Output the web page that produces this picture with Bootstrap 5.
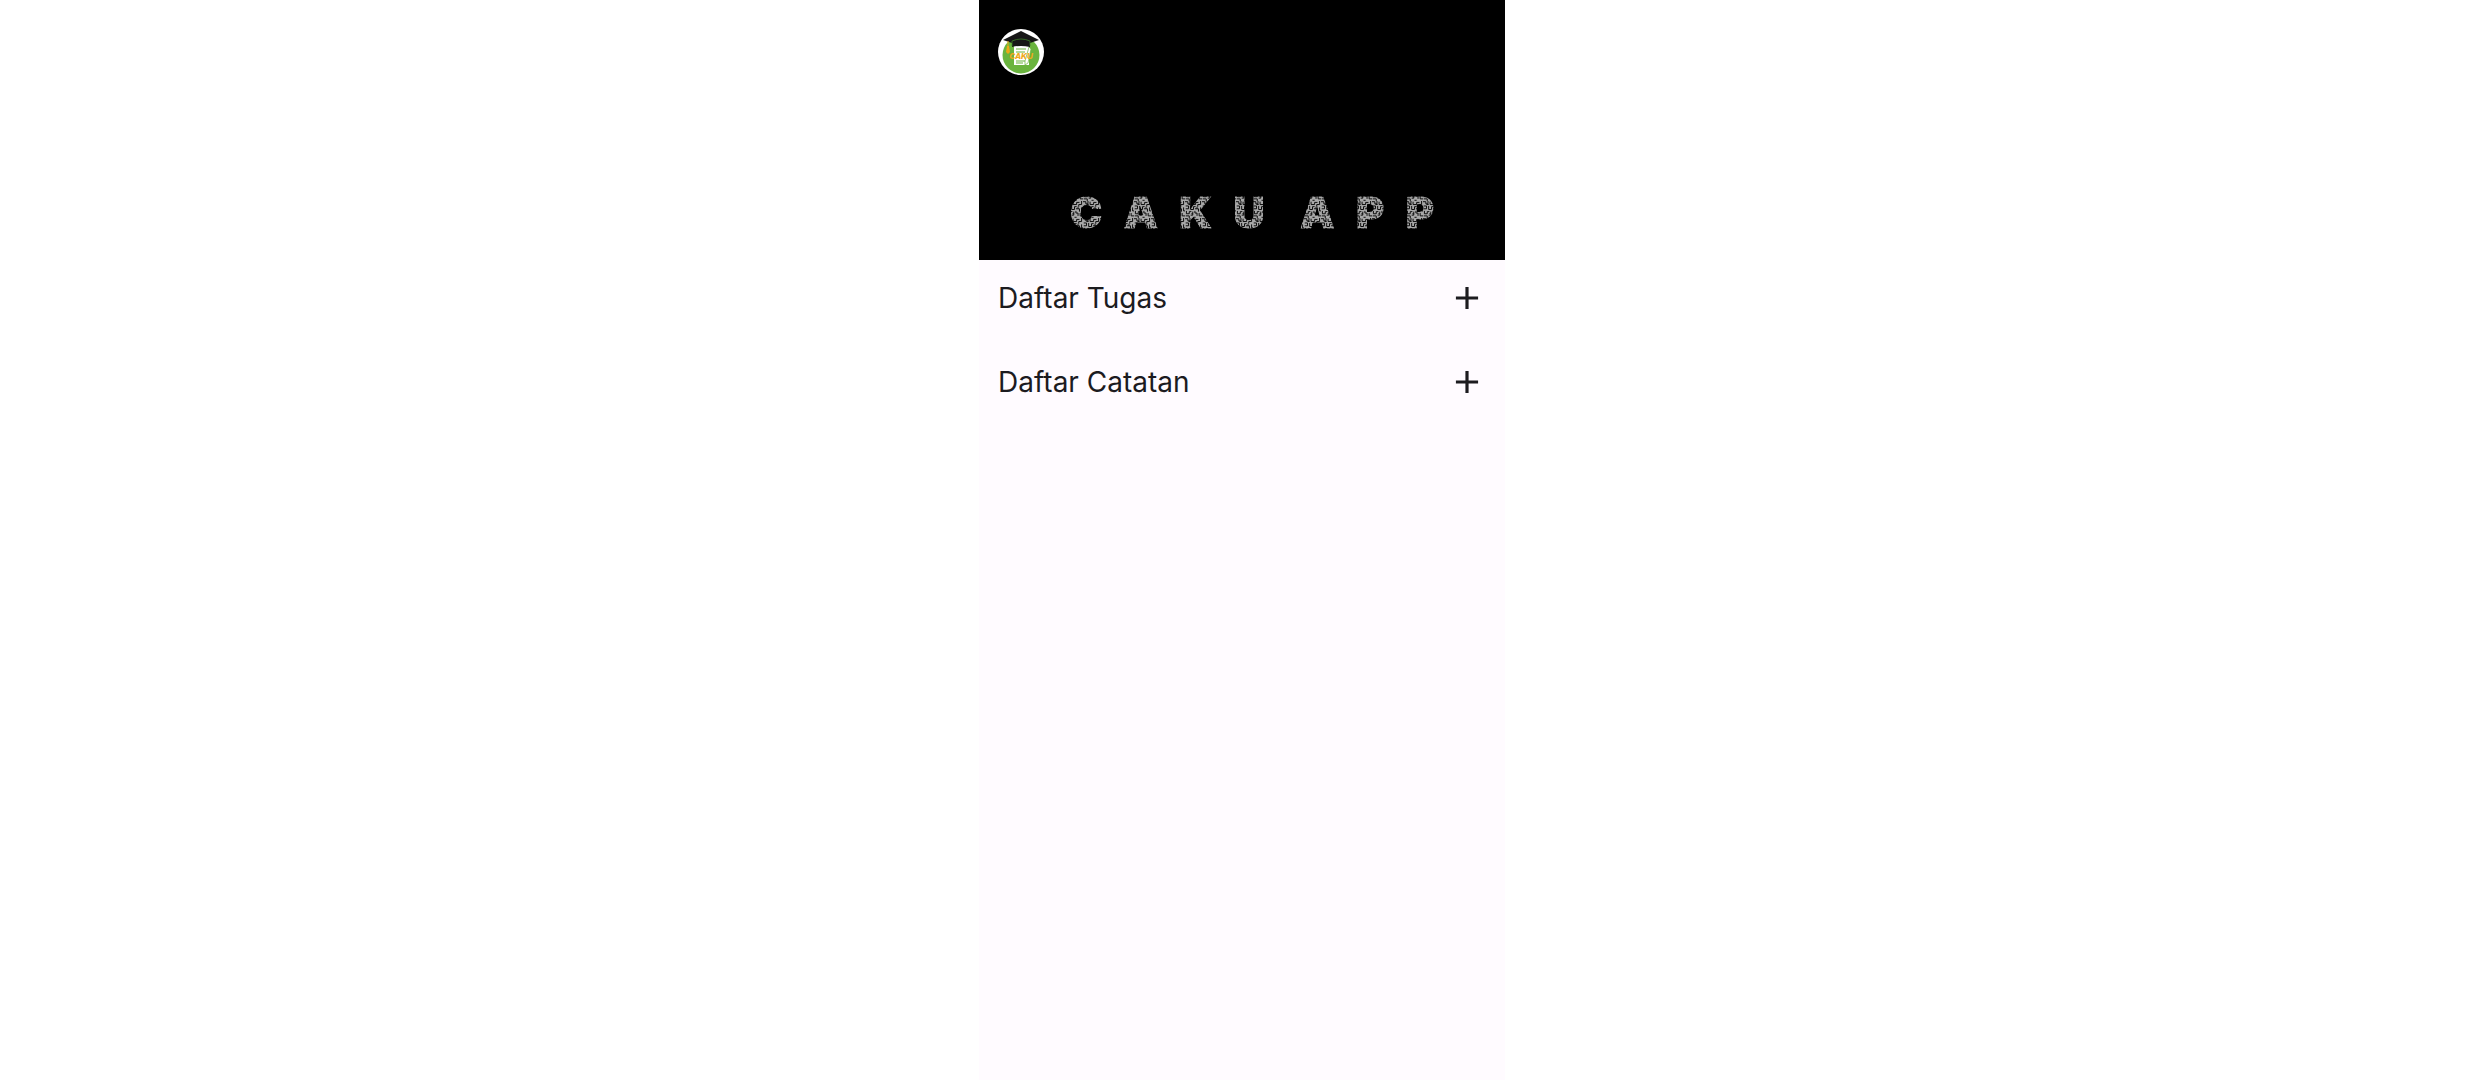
<!DOCTYPE html>
<html lang="id">
<head>
<meta charset="utf-8">
<meta name="viewport" content="width=device-width, initial-scale=1">
<title>Caku App</title>
<link href="https://cdn.jsdelivr.net/npm/bootstrap@5.3.0/dist/css/bootstrap.min.css" rel="stylesheet">
<style>
  body { background: #fff; color: #1c1b1f; font-family: Inter, "Noto Sans", sans-serif; }
  .app-shell { max-width: 526px; background: #fffbff; }
  .app-header { min-height: 260px; padding: 29px 19px 20px; background: #000; }
  .app-logo { width: 46px; height: 46px; }
  .logo-word { font: italic 800 8px Inter, sans-serif; }
  .app-title {
    padding-left: 72px;
    font-size: 43px; line-height: 56px; font-weight: 900; white-space: pre;
    color: transparent;
    -webkit-text-stroke: 1px transparent;
    background: #a8a8a8 url("data:image/svg+xml,%3Csvg xmlns='http://www.w3.org/2000/svg' width='24' height='24'%3E%3Cpath d='M0 1h4v3h3V0M10 1v4h5V2h4M22 0v5h-4v3M1 7h4v4H1M8 7v5h4V8h3M14 11h5v4M22 9v5h2M2 14v4h4v-3h3M11 15v5H8M14 14v3h3v4M20 17v4h4M1 21h5v3M12 23h3M17 11V8M5 5h3M9 18h2' fill='none' stroke='%23000' stroke-width='1.3'/%3E%3C/svg%3E") 0 0 / 17px 17px;
    -webkit-background-clip: text; background-clip: text;
  }
  .section-row { height: 76px; padding: 0 19px; }
  .section-name { font-size: 28px; line-height: 38px; font-weight: 400; }
  .add-btn { width: 38px; height: 38px; color: inherit; }
</style>
</head>
<body>
<div class="app-shell container-fluid p-0 min-vh-100">
  <header class="app-header d-flex flex-column justify-content-between">
    <svg class="app-logo" viewBox="0 0 46 46" role="img" aria-label="Logo Caku">
      <circle cx="23" cy="23" r="23" fill="#fff"/>
      <circle cx="23" cy="26" r="18.5" fill="#6ab43e"/>
      <path d="M16 17h15v19H16z" fill="#fff"/>
      <path d="M18 20h10M18 23h9M18 32h9M18 34h7" stroke="#6ab43e" stroke-width="1.2"/>
      <path d="M31 18l2 2-3 14-3 2v-4z" fill="#fff" stroke="#6ab43e" stroke-width=".7"/>
      <path d="M5 11L23 2l18 9-9 3v4q-9-2-18 0v-4z" fill="#171717"/>
      <path d="M14 17v-5q9-4 18 0v5" fill="none" stroke="#3d7d29" stroke-width=".8"/>
      <path d="M10 12v7" stroke="#eda817" stroke-width="1"/>
      <path d="M9 17h2l1 6-2 2-2-2z" fill="#eda817"/>
      <text class="logo-word" x="23" y="30" text-anchor="middle" fill="#efa91a">CAKU</text>
    </svg>
    <h1 class="app-title mb-0">C&#8194;A&#8194;K&#8194;U&#8194;&#8196;A&#8194;P&#8194;P</h1>
  </header>
  <main class="d-flex flex-column gap-2">
    <section class="section-row d-flex align-items-center justify-content-between">
      <h2 class="section-name mb-0">Daftar Tugas</h2>
      <button type="button" class="add-btn btn border-0 p-0 d-flex" aria-label="Tambah tugas">
        <svg width="38" height="38" viewBox="0 0 24 24" fill="currentColor" aria-hidden="true"><path d="M19 13h-6v6h-2v-6H5v-2h6V5h2v6h6z"/></svg>
      </button>
    </section>
    <section class="section-row d-flex align-items-center justify-content-between">
      <h2 class="section-name mb-0">Daftar Catatan</h2>
      <button type="button" class="add-btn btn border-0 p-0 d-flex" aria-label="Tambah catatan">
        <svg width="38" height="38" viewBox="0 0 24 24" fill="currentColor" aria-hidden="true"><path d="M19 13h-6v6h-2v-6H5v-2h6V5h2v6h6z"/></svg>
      </button>
    </section>
  </main>
</div>
<script src="https://cdn.jsdelivr.net/npm/bootstrap@5.3.0/dist/js/bootstrap.bundle.min.js"></script>
</body>
</html>
